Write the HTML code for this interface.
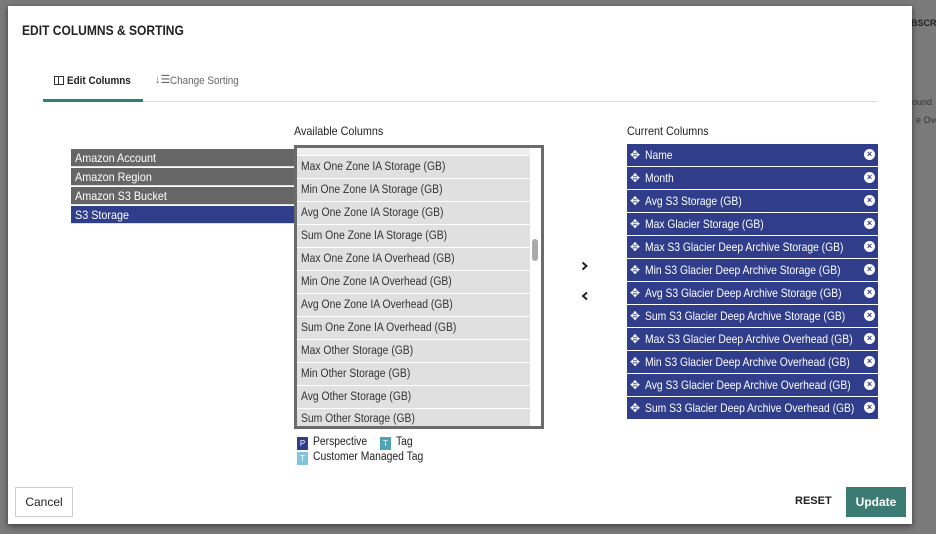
<!DOCTYPE html>
<html><head><meta charset="utf-8"><style>
*{box-sizing:border-box;margin:0;padding:0}
body{width:936px;height:534px;background:#7a7a7a;font-family:"Liberation Sans",Arial,sans-serif;position:relative;overflow:hidden}
.modal{position:absolute;left:8px;top:6px;width:904px;height:518px;background:#fff;box-shadow:0 2px 6px rgba(0,0,0,.5)}
.abs{position:absolute;white-space:nowrap}
.s{display:inline-block;transform:scaleX(.9);transform-origin:0 50%}
.t{font-size:14px;color:#222;white-space:nowrap}
.lrow{position:absolute;left:71px;width:224px;height:18px;background:#666;color:#fff;font-size:12px;line-height:18px;padding-left:4px;border-bottom:1px solid #ddd;white-space:nowrap}
.arow{position:absolute;left:297px;width:233px;height:22px;background:#e0e0e0;color:#333;font-size:11.5px;line-height:22px;padding-left:4px;white-space:nowrap}
.crow{position:absolute;left:627px;width:251px;height:22px;background:#2f3d8a;color:#fff;font-size:12px;line-height:22px;padding-left:18px;white-space:nowrap;overflow:hidden}
.crow .s{transform:scaleX(.86)}
.crow:before{content:"✥";position:absolute;left:3px;top:0;font-size:12px}
.x{position:absolute;right:3px;top:5px;width:11px;height:11px;border-radius:50%;background:#fff;color:#2f3d8a;font-size:9px;line-height:11px;text-align:center;font-weight:bold}
</style></head><body>
<div class="abs" style="left:911px;top:18px;font-size:9px;color:#222;font-weight:bold">BSCR</div>
<div class="abs" style="left:912px;top:97px;font-size:9px;color:#333">ound</div>
<div class="abs" style="left:916px;top:115px;font-size:9px;color:#333">e Ove</div>
<div class="modal"></div>
<div class="abs t" style="left:22px;top:22px;font-size:14px;color:#222;font-weight:bold"><span class="s" style="transform:scaleX(.86)">EDIT COLUMNS &amp; SORTING</span></div>
<div class="abs" style="left:54px;top:76px;width:10px;height:9px;border:1px solid #333"></div>
<div class="abs" style="left:58px;top:76px;width:1px;height:9px;background:#333"></div>
<div class="abs" style="left:67px;top:75px;font-size:11px;font-weight:bold;color:#222"><span class="s">Edit Columns</span></div>
<div class="abs" style="left:155px;top:73px;font-size:11px;color:#666">↓☰</div>
<div class="abs" style="left:170px;top:75px;font-size:11px;color:#666"><span class="s">Change Sorting</span></div>
<div class="abs" style="left:43px;top:101px;width:835px;height:1px;background:#ddd"></div>
<div class="abs" style="left:43px;top:99px;width:100px;height:3px;background:#2a7f7f"></div>
<div class="abs t" style="left:294px;top:124px;font-size:12px"><span class="s">Available Columns</span></div>
<div class="abs t" style="left:627px;top:124px;font-size:12px"><span class="s">Current Columns</span></div>
<div class="lrow" style="top:149px"><span class="s">Amazon Account</span></div>
<div class="lrow" style="top:168px"><span class="s">Amazon Region</span></div>
<div class="lrow" style="top:187px"><span class="s">Amazon S3 Bucket</span></div>
<div class="lrow" style="top:206px;background:#2f3d8a"><span class="s">S3 Storage</span></div>
<div class="abs" style="left:294px;top:145px;width:250px;height:284px;border:3px solid #6b6b6b;background:#fff;overflow:hidden"></div>
<div class="abs" style="left:297px;top:148px;width:233px;height:7px;background:#eee"></div>
<div class="arow" style="top:156px"><span class="s">Max One Zone IA Storage (GB)</span></div>
<div class="arow" style="top:179px"><span class="s">Min One Zone IA Storage (GB)</span></div>
<div class="arow" style="top:202px"><span class="s">Avg One Zone IA Storage (GB)</span></div>
<div class="arow" style="top:225px"><span class="s">Sum One Zone IA Storage (GB)</span></div>
<div class="arow" style="top:248px"><span class="s">Max One Zone IA Overhead (GB)</span></div>
<div class="arow" style="top:271px"><span class="s">Min One Zone IA Overhead (GB)</span></div>
<div class="arow" style="top:294px"><span class="s">Avg One Zone IA Overhead (GB)</span></div>
<div class="arow" style="top:317px"><span class="s">Sum One Zone IA Overhead (GB)</span></div>
<div class="arow" style="top:340px"><span class="s">Max Other Storage (GB)</span></div>
<div class="arow" style="top:363px"><span class="s">Min Other Storage (GB)</span></div>
<div class="arow" style="top:386px"><span class="s">Avg Other Storage (GB)</span></div>
<div class="arow" style="top:409px;height:17px;line-height:20px"><span class="s">Sum Other Storage (GB)</span></div>
<div class="abs" style="left:532px;top:239px;width:6px;height:22px;border-radius:3px;background:#aaa"></div>
<svg class="abs" style="left:581px;top:261px" width="8" height="40" viewBox="0 0 8 40"><path d="M1.5 1.5 L5.5 5 L1.5 8.5" fill="none" stroke="#222" stroke-width="2"/><path d="M6 31.5 L2 35 L6 38.5" fill="none" stroke="#222" stroke-width="2"/></svg>
<div class="abs" style="left:297px;top:437px;width:11px;height:13px;background:#2f3d8a;color:#fff;font-size:8px;text-align:center;line-height:13px">P</div>
<div class="abs" style="left:313px;top:436px;font-size:11.5px;color:#222"><span class="s">Perspective</span></div>
<div class="abs" style="left:380px;top:437px;width:11px;height:13px;background:#4fa3b3;color:#fff;font-size:8px;text-align:center;line-height:13px">T</div>
<div class="abs" style="left:396px;top:436px;font-size:11.5px;color:#222"><span class="s">Tag</span></div>
<div class="abs" style="left:297px;top:452px;width:11px;height:13px;background:#7fc6de;color:#fff;font-size:8px;text-align:center;line-height:13px">T</div>
<div class="abs" style="left:313px;top:451px;font-size:11.5px;color:#222"><span class="s">Customer Managed Tag</span></div>
<div class="crow" style="top:144px"><span class="s">Name</span><span class="x">×</span></div>
<div class="crow" style="top:167px"><span class="s">Month</span><span class="x">×</span></div>
<div class="crow" style="top:190px"><span class="s">Avg S3 Storage (GB)</span><span class="x">×</span></div>
<div class="crow" style="top:213px"><span class="s">Max Glacier Storage (GB)</span><span class="x">×</span></div>
<div class="crow" style="top:236px"><span class="s">Max S3 Glacier Deep Archive Storage (GB)</span><span class="x">×</span></div>
<div class="crow" style="top:259px"><span class="s">Min S3 Glacier Deep Archive Storage (GB)</span><span class="x">×</span></div>
<div class="crow" style="top:282px"><span class="s">Avg S3 Glacier Deep Archive Storage (GB)</span><span class="x">×</span></div>
<div class="crow" style="top:305px"><span class="s">Sum S3 Glacier Deep Archive Storage (GB)</span><span class="x">×</span></div>
<div class="crow" style="top:328px"><span class="s">Max S3 Glacier Deep Archive Overhead (GB)</span><span class="x">×</span></div>
<div class="crow" style="top:351px"><span class="s">Min S3 Glacier Deep Archive Overhead (GB)</span><span class="x">×</span></div>
<div class="crow" style="top:374px"><span class="s">Avg S3 Glacier Deep Archive Overhead (GB)</span><span class="x">×</span></div>
<div class="crow" style="top:397px"><span class="s">Sum S3 Glacier Deep Archive Overhead (GB)</span><span class="x">×</span></div>
<div class="abs" style="left:15px;top:487px;width:58px;height:30px;border:1px solid #ccc;font-size:12px;color:#222;text-align:center;line-height:28px">Cancel</div>
<div class="abs" style="left:795px;top:495px;font-size:11px;font-weight:bold;color:#222">RESET</div>
<div class="abs" style="left:846px;top:487px;width:60px;height:30px;background:#3c7a74;color:#fff;font-size:12px;font-weight:bold;text-align:center;line-height:30px">Update</div>
</body></html>
